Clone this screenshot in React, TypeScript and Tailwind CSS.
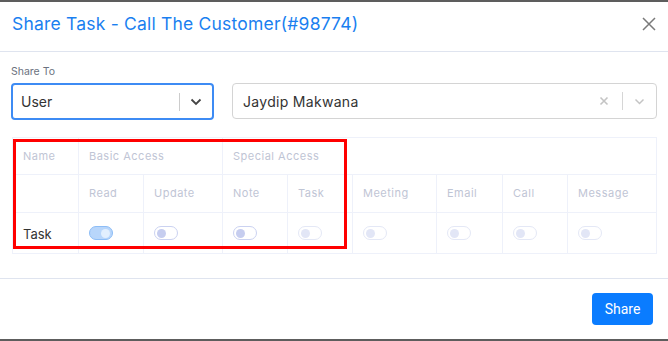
import React from "react";

function Toggle({ state }: { state: "on" | "off" | "disabled" }) {
  if (state === "on") {
    return (
      <div className="w-[24px] h-[14px] rounded-full border border-[#8dbdf6] bg-[#b8d6fb] flex items-center justify-end pr-[2px]">
        <div className="w-[9px] h-[9px] rounded-full bg-[#e2effe]" />
      </div>
    );
  }
  const knob = state === "off" ? "bg-[#c6cdef]" : "bg-[#e2e6f6]";
  const border = state === "off" ? "border-[#cbd2f1]" : "border-[#e4e8f6]";
  return (
    <div className={`w-[24px] h-[14px] rounded-full border ${border} bg-white flex items-center pl-[2px]`}>
      <div className={`w-[9px] h-[9px] rounded-full ${knob}`} />
    </div>
  );
}

export default function App() {
  const font = { fontFamily: "Inter, 'Noto Sans', sans-serif" };
  const th = "border border-[#eef1fa] px-[10px] text-left font-normal text-[11px] tracking-[0.5px] text-[#bfc5d5]";
  const td = "border border-[#eef1fa] px-[10px]";
  return (
    <div className="w-[668px] h-[341px] bg-white border-t-2 border-b-2 border-[#5d5d5d] flex flex-col" style={font}>
      <div className="h-[50px] flex items-center justify-between pl-[12px] pr-[12px] pb-[5px] border-b border-[#dfe4ef]">
        <div className="text-[17.5px] text-[#1a7ff0] tracking-[0.2px]" style={{ fontFamily: "Inter, sans-serif" }}>
          Share Task - Call The Customer(#98774)
        </div>
        <svg width="14" height="14" viewBox="0 0 14 14" className="mr-[0px]">
          <path d="M1 1 L13 13 M13 1 L1 13" stroke="#7a7a7a" strokeWidth="1.5" />
        </svg>
      </div>
      <div className="flex-1 flex flex-col px-[11px] pt-[13px]">
        <div className="text-[10.5px] leading-[14px] text-[#6b7280] mb-[4px]">Share To</div>
        <div className="flex gap-[18px]">
          <div className="w-[203px] h-[37px] rounded-[4px] border-2 border-[#3d8bf4] flex items-center">
            <div className="flex-1 pl-[8px] text-[14px] text-[#333]">User</div>
            <div className="w-px h-[18px] bg-[#cccccc]" />
            <div className="w-[32px] flex justify-center">
              <svg width="12" height="8" viewBox="0 0 12 8">
                <path d="M1.5 1.5 L6 6 L10.5 1.5" stroke="#444" strokeWidth="1.8" fill="none" />
              </svg>
            </div>
          </div>
          <div className="flex-1 h-[36px] rounded-[4px] border border-[#d4d4d4] flex items-center">
            <div className="flex-1 pl-[10px] text-[14px] text-[#333] tracking-[0.3px]">Jaydip Makwana</div>
            <svg width="10" height="10" viewBox="0 0 10 10" className="mr-[13px]">
              <path d="M1.5 1.5 L8.5 8.5 M8.5 1.5 L1.5 8.5" stroke="#c4c4c4" strokeWidth="1.6" />
            </svg>
            <div className="w-px h-[18px] bg-[#d6d6d6]" />
            <div className="w-[33px] flex justify-center">
              <svg width="11" height="7" viewBox="0 0 11 7">
                <path d="M1.5 1.5 L5.5 5.5 L9.5 1.5" stroke="#c4c4c4" strokeWidth="1.5" fill="none" />
              </svg>
            </div>
          </div>
        </div>
        <div className="relative ml-[1px] mt-[17px] w-[644px]">
          <table className="table-fixed border-collapse w-[644px]">
            <colgroup>
              <col className="w-[66px]" />
              <col className="w-[65px]" />
              <col className="w-[79px]" />
              <col className="w-[65px]" />
              <col className="w-[65px]" />
              <col className="w-[84px]" />
              <col className="w-[66px]" />
              <col className="w-[65px]" />
              <col className="w-[89px]" />
            </colgroup>
            <tbody>
              <tr className="h-[37px]">
                <td className={th}>Name</td>
                <td className={th} colSpan={2}>Basic Access</td>
                <td className={th} colSpan={6}>Special Access</td>
              </tr>
              <tr className="h-[38px]">
                <td className={th}></td>
                <td className={th}>Read</td>
                <td className={th}>Update</td>
                <td className={th}>Note</td>
                <td className={th}>Task</td>
                <td className={th}>Meeting</td>
                <td className={th}>Email</td>
                <td className={th}>Call</td>
                <td className={th}>Message</td>
              </tr>
              <tr className="h-[41px]">
                <td className={`${td} pt-[3px] text-[13px] text-[#333]`}>Task</td>
                <td className={td}><Toggle state="on" /></td>
                <td className={td}><Toggle state="off" /></td>
                <td className={td}><Toggle state="off" /></td>
                <td className={td}><Toggle state="disabled" /></td>
                <td className={td}><Toggle state="disabled" /></td>
                <td className={td}><Toggle state="disabled" /></td>
                <td className={td}><Toggle state="disabled" /></td>
                <td className={td}><Toggle state="disabled" /></td>
              </tr>
            </tbody>
          </table>
          <div className="absolute left-[1px] top-[2px] w-[334px] h-[110px] border-[3px] border-[#ff0000] pointer-events-none" />
        </div>
      </div>
      <div className="h-[61px] border-t border-[#dfe4ef] flex items-center justify-end pr-[15px]">
        <button className="w-[61px] h-[32px] rounded-[4px] bg-[#0a7cff] text-white text-[14px]" style={{ fontFamily: "Roboto, sans-serif" }}>
          Share
        </button>
      </div>
    </div>
  );
}
